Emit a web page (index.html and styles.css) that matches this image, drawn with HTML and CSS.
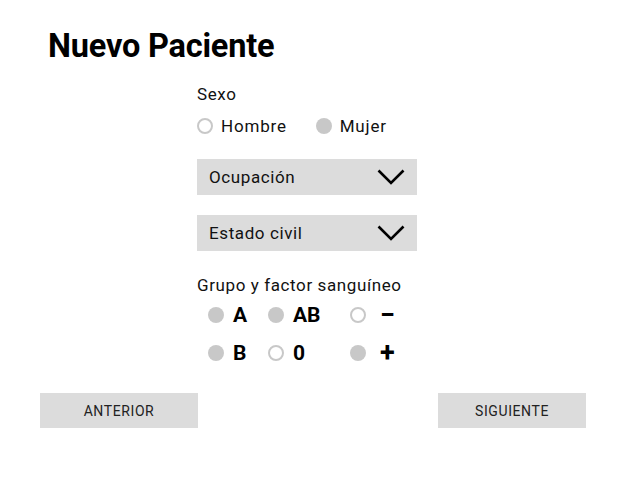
FILE: index.html
```html
<!DOCTYPE html>
<html lang="es">
<head>
<meta charset="utf-8">
<title>Nuevo Paciente</title>
<link rel="stylesheet" href="styles.css">
</head>
<body>
<main class="page">
  <h1 class="title">Nuevo Paciente</h1>
  <form class="form">
    <div class="field">
      <div class="label">Sexo</div>
      <div class="radio-row">
        <label class="radio"><span class="dot dot-empty"></span>Hombre</label>
        <label class="radio"><span class="dot dot-filled"></span>Mujer</label>
      </div>
    </div>
    <div class="select">
      <span>Ocupación</span>
      <svg class="chev" width="28" height="16" viewBox="0 0 28 16"><path d="M1.5 1.5 L14 14 L26.5 1.5" fill="none" stroke="#000" stroke-width="2.6"/></svg>
    </div>
    <div class="select">
      <span>Estado civil</span>
      <svg class="chev" width="28" height="16" viewBox="0 0 28 16"><path d="M1.5 1.5 L14 14 L26.5 1.5" fill="none" stroke="#000" stroke-width="2.6"/></svg>
    </div>
    <div class="field blood">
      <div class="label">Grupo y factor sanguíneo</div>
      <div class="blood-grid">
        <label class="bradio"><span class="dot dot-filled"></span>A</label>
        <label class="bradio"><span class="dot dot-filled"></span>AB</label>
        <label class="bradio"><span class="dot dot-empty"></span><span class="sign">−</span></label>
        <label class="bradio"><span class="dot dot-filled"></span>B</label>
        <label class="bradio"><span class="dot dot-empty"></span>0</label>
        <label class="bradio"><span class="dot dot-filled"></span><span class="sign">+</span></label>
      </div>
    </div>
  </form>
  <div class="nav">
    <button class="btn btn-prev" type="button">ANTERIOR</button>
    <button class="btn btn-next" type="button">SIGUIENTE</button>
  </div>
</main>
</body>
</html>
```
FILE: styles.css
```css
* { box-sizing: border-box; }
html, body { margin: 0; background: #fff; }
body {
  font-family: Roboto, "Liberation Sans", sans-serif;
  color: #111;
}
.page {
  width: 627px;
  height: 493px;
  padding-top: 26px;
}
.title {
  margin: 0 0 0 48px;
  font-size: 32.5px;
  font-weight: 700;
  line-height: 40px;
  color: #000;
  letter-spacing: -0.2px;
}
.form {
  margin-left: 197px;
  width: 220px;
  padding-top: 16px;
}
.label {
  font-size: 17px;
  letter-spacing: 0.6px;
  line-height: 24px;
  color: #111;
}
.radio-row {
  display: flex;
  gap: 29px;
  margin-top: 10px;
}
.radio {
  display: flex;
  align-items: center;
  gap: 8px;
  font-size: 17px;
  letter-spacing: 0.8px;
  line-height: 20px;
}
.dot {
  display: inline-block;
  width: 16px;
  height: 16px;
  border-radius: 50%;
  flex: none;
}
.dot-empty { border: 2.5px solid #c8c8c8; background: #fff; }
.dot-filled { background: #c8c8c8; }
.select {
  display: flex;
  align-items: center;
  justify-content: space-between;
  height: 36px;
  margin-top: 23px;
  padding: 0 12px;
  background: #dcdcdc;
  font-size: 17px;
  letter-spacing: 0.6px;
}
.select + .select { margin-top: 20px; }
.chev { display: block; }
.blood { margin-top: 22px; }
.blood-grid {
  display: grid;
  grid-template-columns: 60px 82px 60px;
  row-gap: 16px;
  margin-top: 7px;
  padding-left: 11px;
}
.bradio {
  display: flex;
  align-items: center;
  gap: 9px;
  font-size: 21px;
  font-weight: 700;
  line-height: 22px;
  color: #000;
}
.sign { font-size: 27px; font-weight: 700; padding-left: 5px; }
.nav {
  display: flex;
  justify-content: space-between;
  margin: 29px 41px 0 40px;
}
.btn {
  height: 35px;
  border: 0;
  background: #dcdcdc;
  font-family: Roboto, "Liberation Sans", sans-serif;
  font-size: 14px;
  color: #222;
  letter-spacing: 0.6px;
  padding: 0;
}
.btn-prev { width: 158px; }
.btn-next { width: 148px; }
```
